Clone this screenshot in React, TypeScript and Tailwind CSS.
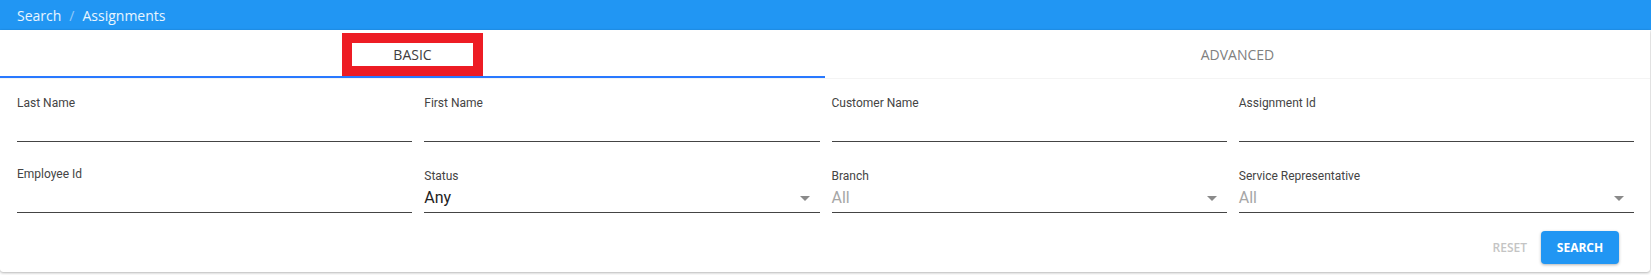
const openSans = "font-['Open_Sans',sans-serif]"
const roboto = "font-['Roboto',sans-serif]"

type Field =
  | { kind: 'text'; label: string }
  | { kind: 'select'; label: string; value: string; placeholder?: boolean }

const fields: Field[] = [
  { kind: 'text', label: 'Last Name' },
  { kind: 'text', label: 'First Name' },
  { kind: 'text', label: 'Customer Name' },
  { kind: 'text', label: 'Assignment Id' },
  { kind: 'text', label: 'Employee Id' },
  { kind: 'select', label: 'Status', value: 'Any' },
  { kind: 'select', label: 'Branch', value: 'All', placeholder: true },
  { kind: 'select', label: 'Service Representative', value: 'All', placeholder: true },
]

function Caret() {
  // small filled triangle, like the native md-select arrow
  return (
    <svg width="10" height="5" viewBox="0 0 10 5" className="shrink-0 mr-[10px]" aria-hidden>
      <path d="M0 0 L10 0 L5 5 Z" fill="#8a8a8a" />
    </svg>
  )
}

function FormField({ field }: { field: Field }) {
  if (field.kind === 'text') {
    return (
      <div className="h-[47px] flex flex-col">
        <label className={`${roboto} text-[12px] leading-4 text-[#444]`}>{field.label}</label>
        <div className="h-[31px] border-b border-[#444]" />
      </div>
    )
  }
  return (
    <div className="h-[47px] flex flex-col justify-end">
      <label className={`${roboto} text-[12px] leading-4 text-[#444]`}>{field.label}</label>
      <div className="mt-1 pb-1 flex items-center justify-between border-b border-[#444]">
        <span
          className={`${roboto} text-[16px] leading-5 ${field.placeholder ? 'text-[#a6a6a6]' : 'text-[#222]'}`}
        >
          {field.value}
        </span>
        <Caret />
      </div>
    </div>
  )
}

export default function App() {
  return (
    <div className="w-[1651px] h-[275px] bg-white">
      <header className="h-[30px] bg-[#2196f3] flex items-center px-[17px]">
        <nav className={`${openSans} text-[14px] flex items-center`}>
          <span className="text-white/90">Search</span>
          <span className="mx-[8px] text-white/50">/</span>
          <span className="text-white/90">Assignments</span>
        </nav>
      </header>

      <section className="mr-[1px] rounded-b-[3px] bg-white shadow-[0_1px_3px_rgba(0,0,0,0.28),0_0_1px_rgba(0,0,0,0.2)]">
        <div className="grid grid-cols-2 h-[48px]">
          <button className="relative flex items-center justify-center">
            <span className="w-[141px] h-[43px] border-[10px] border-[#ed1c24] flex items-center justify-center">
              <span className={`${openSans} text-[14px] text-[#3d3d3d]`}>BASIC</span>
            </span>
            <span className="absolute left-0 right-0 bottom-0 h-[2px] bg-[#2979ff]" />
          </button>
          <button className="flex items-center justify-center">
            <span className={`${openSans} text-[14px] text-[#808080]`}>ADVANCED</span>
          </button>
        </div>

        <form className="border-t border-[#f4f4f4] pt-4 pl-[17px] pr-[16px] pb-2">
          <div className="grid grid-cols-4 gap-x-3 gap-y-6">
            {fields.map((f) => (
              <FormField key={f.label} field={f} />
            ))}
          </div>

          <div className="flex justify-end items-center mt-[18px] pr-[15px]">
            <button
              type="button"
              className={`${openSans} text-[12px] font-semibold text-[#c4c4c4] px-2 h-[33px] mr-[6px]`}
            >
              RESET
            </button>
            <button
              type="button"
              className={`${openSans} text-[12px] font-bold text-white bg-[#2196f3] w-[78px] h-[33px] rounded-[4px] shadow-[0_1px_3px_rgba(0,0,0,0.3)]`}
            >
              SEARCH
            </button>
          </div>
        </form>
      </section>
    </div>
  )
}
